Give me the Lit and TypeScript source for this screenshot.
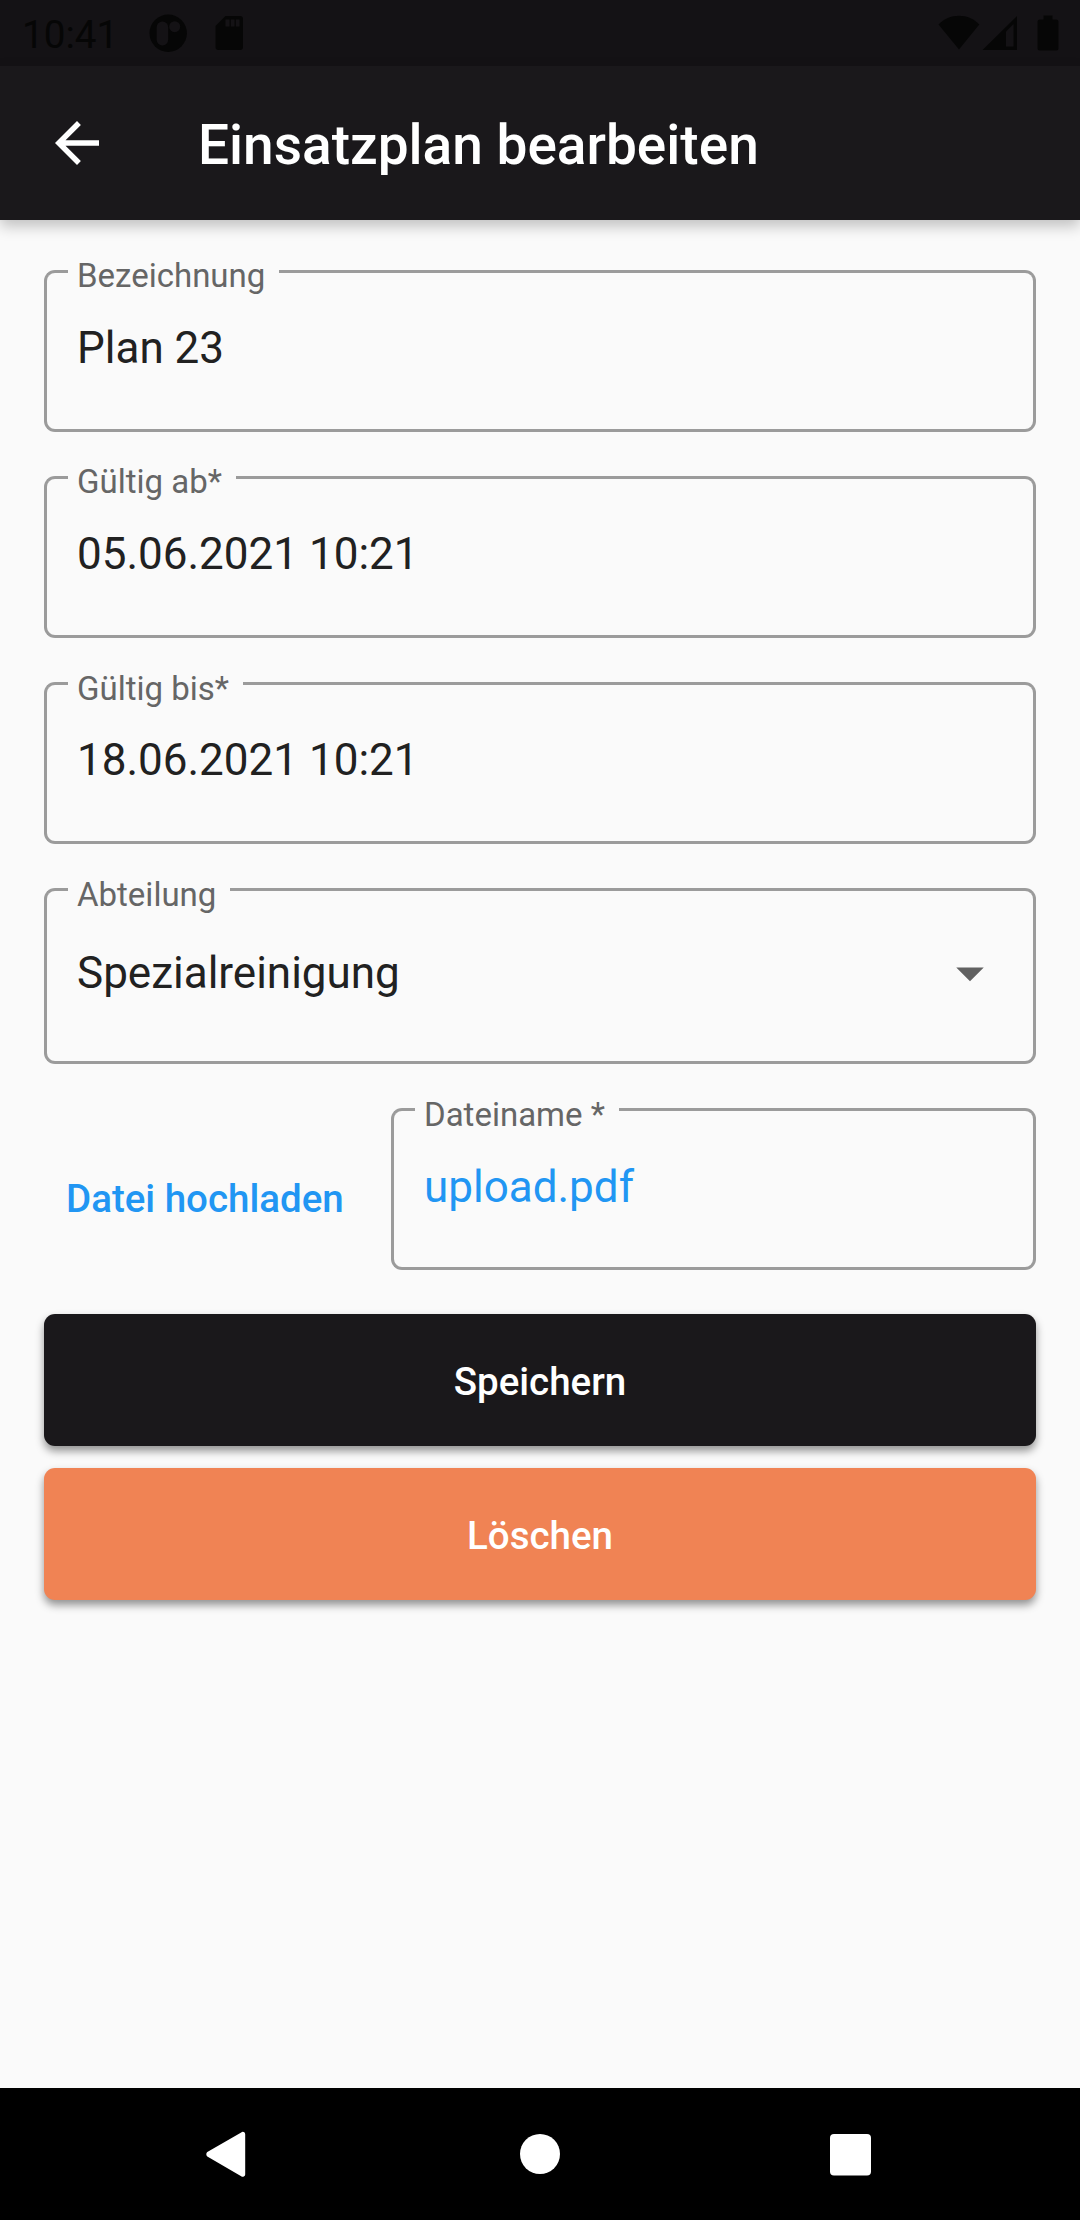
import { LitElement, html, css } from "lit";
import { customElement, property } from "lit/decorators.js";

@customElement("outlined-field")
class OutlinedField extends LitElement {
  @property() label = "";
  @property() value = "";
  @property({ type: Boolean, reflect: true }) select = false;
  @property({ type: Boolean, reflect: true }) link = false;

  static styles = css`
    :host {
      display: grid;
      height: 162px;
      box-sizing: border-box;
      color: #212121;
    }
    :host([select]) {
      height: 176px;
    }
    .outline,
    .content {
      grid-area: 1 / 1;
      min-width: 0;
    }
    .outline {
      display: flex;
    }
    .lead,
    .notch,
    .trail {
      box-sizing: border-box;
      border: 3px solid #9b9b9b;
    }
    .lead {
      width: 23.5px;
      border-right: 0;
      border-radius: 11px 0 0 11px;
    }
    .notch {
      border-width: 0 0 3px;
      padding: 0 14px 0 9.5px;
    }
    .trail {
      flex: 1;
      border-left: 0;
      border-radius: 0 11px 11px 0;
    }
    .label {
      display: block;
      margin-top: -13.5px;
      font-size: 33px;
      line-height: 39px;
      color: #666;
      white-space: nowrap;
    }
    .content {
      display: flex;
      justify-content: space-between;
      align-items: flex-start;
      padding: 52.2px 33px 0;
      font-size: 44px;
      line-height: 52px;
    }
    :host([select]) .content {
      padding-top: 59px;
    }
    :host([link]) .content {
      color: #2196f3;
    }
    .arrow {
      width: 66px;
      height: 66px;
      margin-top: -7px;
      fill: #616161;
    }
  `;

  render() {
    return html`
      <div class="outline">
        <div class="lead"></div>
        <div class="notch"><span class="label">${this.label}</span></div>
        <div class="trail"></div>
      </div>
      <div class="content">
        <span>${this.value}</span>
        ${this.select
          ? html`<svg class="arrow" viewBox="0 0 24 24"><path d="M7 10l5 5 5-5z" /></svg>`
          : null}
      </div>
    `;
  }
}

@customElement("app-root")
class AppRoot extends LitElement {
  static styles = css`
    :host {
      display: flex;
      flex-direction: column;
      height: 2220px;
      background: #fafafa;
      font-family: Roboto, "Liberation Sans", sans-serif;
    }
    .status {
      display: flex;
      align-items: center;
      justify-content: space-between;
      box-sizing: border-box;
      height: 66px;
      padding: 0 21px 0 22px;
      background: #141215;
      color: #060606;
      fill: #060606;
      font-size: 38.7px;
    }
    .group {
      display: flex;
      align-items: center;
    }
    .clock {
      width: 127px;
      line-height: 46px;
      padding-top: 4px;
    }
    .group svg {
      display: block;
    }
    .debug {
      width: 38px;
      height: 38px;
    }
    .card {
      width: 28px;
      height: 36px;
      margin-left: 28px;
    }
    .wifi {
      width: 42px;
      height: 36px;
    }
    .signal {
      width: 36px;
      height: 36px;
      margin-left: 2px;
    }
    .battery {
      width: 22px;
      height: 36px;
      margin-left: 19px;
    }
    .cutout {
      fill: #141215;
    }
    .bar {
      display: flex;
      align-items: center;
      height: 154px;
      padding-left: 44px;
      background: #1a181b;
      color: #fff;
      box-shadow: 0 6px 14px rgba(0, 0, 0, 0.24);
      z-index: 1;
    }
    .back {
      width: 66px;
      height: 66px;
      fill: #fff;
    }
    .title {
      margin: 4px 0 0 88px;
      font-size: 55px;
      font-weight: 500;
      line-height: 64px;
    }
    .form {
      flex: 1;
      display: flex;
      flex-direction: column;
      padding: 49.6px 44px 0;
    }
    .fields {
      display: flex;
      flex-direction: column;
      gap: 44.25px;
    }
    .upload {
      display: flex;
      margin-top: -0.2px;
    }
    .upload outlined-field {
      flex: 1;
    }
    .pick {
      width: 347px;
      box-sizing: border-box;
      padding: 68px 0 0 22px;
      font-size: 38.5px;
      font-weight: 500;
      line-height: 45px;
      color: #2196f3;
      white-space: nowrap;
    }
    .actions {
      display: flex;
      flex-direction: column;
      gap: 22px;
      margin-top: 44px;
    }
    .action {
      height: 132px;
      border: 0;
      padding: 3px 0 0;
      border-radius: 11px;
      background: #1a181b;
      color: #fff;
      font: 500 38.5px/45px Roboto, sans-serif;
      box-shadow: 0 5px 8px rgba(0, 0, 0, 0.42);
    }
    .danger {
      background: #f08354;
    }
    .nav {
      display: grid;
      grid-template-columns: 310px 310px 310px;
      justify-content: center;
      justify-items: center;
      align-items: center;
      height: 132px;
      background: #000;
      fill: #fff;
    }
    .nav svg {
      width: 48px;
      height: 48px;
    }
  `;

  private statusIcons() {
    return html`
      <div class="group">
        <svg class="wifi" viewBox="0 0 42 36">
          <path d="M.5 9.500C6 4 13 .8 21 .8S36 4 41.300 9.500L21 34.600z" />
        </svg>
        <svg class="signal" viewBox="0 0 36 36">
          <path d="M.5 35 35 1v34z" />
          <path class="cutout" d="M24 16.500 31.500 9v22.500H24z" />
        </svg>
        <svg class="battery" viewBox="0 0 22 36">
          <path d="M6.500.5h9v4H19a2.500 2.500 0 0 1 2.500 2.500v26a2.500 2.500 0 0 1-2.500 2.500H3A2.500 2.500 0 0 1 .5 33V7A2.500 2.500 0 0 1 3 4.500h3.500z" />
        </svg>
      </div>
    `;
  }

  render() {
    return html`
      <div class="status">
        <div class="group">
          <span class="clock">10:41</span>
          <svg class="debug" viewBox="0 0 38 38">
            <circle cx="19.200" cy="19.200" r="18.700" />
            <rect class="cutout" x="7.700" y="7.500" width="11.500" height="24" rx="5.700" />
            <circle class="cutout" cx="25.700" cy="12.700" r="5.500" />
          </svg>
          <svg class="card" viewBox="0 0 28 36">
            <path d="M10.500 1H25a3 3 0 0 1 3 3v28a3 3 0 0 1-3 3H3.500a3 3 0 0 1-3-3V11z" />
            <path class="cutout" d="M10.500 4.500h4v7h-4zM15.800 4.500h3.700v7h-3.700zM20.800 4.500h3.700v7h-3.700z" />
          </svg>
        </div>
        ${this.statusIcons()}
      </div>
      <header class="bar">
        <svg class="back" viewBox="0 0 24 24">
          <path d="M20 11H7.830l5.590-5.590L12 4l-8 8 8 8 1.410-1.410L7.830 13H20v-2z" />
        </svg>
        <div class="title">Einsatzplan bearbeiten</div>
      </header>
      <main class="form">
        <div class="fields">
          <outlined-field label="Bezeichnung" value="Plan 23"></outlined-field>
          <outlined-field label="Gültig ab*" value="05.06.2021 10:21"></outlined-field>
          <outlined-field label="Gültig bis*" value="18.06.2021 10:21"></outlined-field>
          <outlined-field label="Abteilung" value="Spezialreinigung" select></outlined-field>
          <div class="upload">
            <div class="pick">Datei hochladen</div>
            <outlined-field label="Dateiname *" value="upload.pdf" link></outlined-field>
          </div>
        </div>
        <div class="actions">
          <button class="action">Speichern</button>
          <button class="action danger">Löschen</button>
        </div>
      </main>
      <nav class="nav">
        <svg viewBox="0 0 48 48">
          <path d="M39.200 4.200v40.200a2.400 2.400 0 0 1-4 1.800L1.300 26.400a2.900 2.900 0 0 1 0-4.400L35.200 2.400a2.400 2.400 0 0 1 4 1.800z" />
        </svg>
        <svg viewBox="0 0 48 48"><circle cx="24" cy="24" r="20" /></svg>
        <svg viewBox="0 0 48 48"><rect x="4" y="4" width="41" height="41.500" rx="4" /></svg>
      </nav>
    `;
  }
}
